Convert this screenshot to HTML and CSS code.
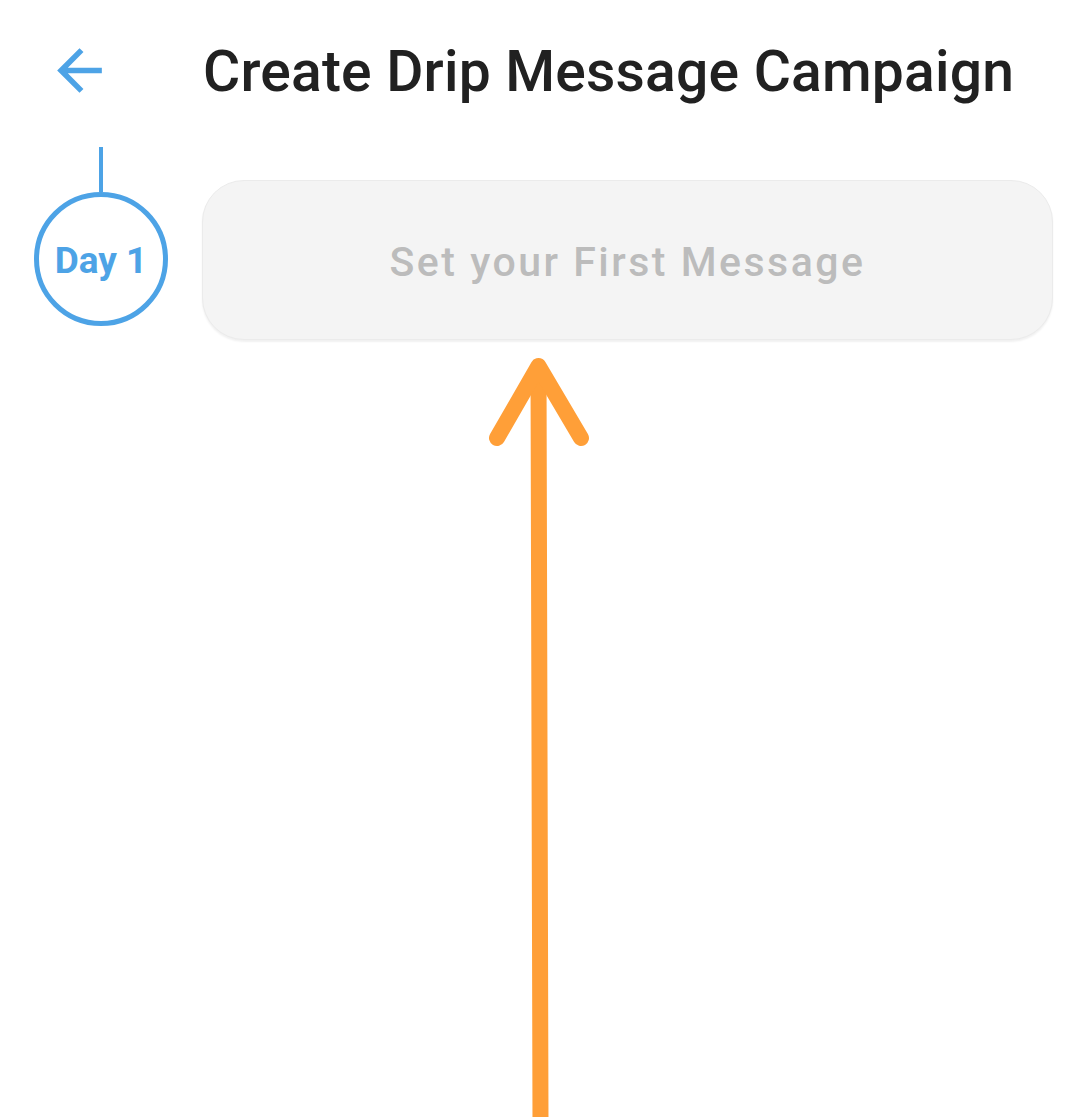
FILE: index.html
```html
<!DOCTYPE html>
<html>
<head>
<meta charset="utf-8">
<link rel="stylesheet" href="styles.css">
</head>
<body>
<div class="page">
  <header class="header">
    <svg class="back" viewBox="0 0 24 24"><path d="M20 11H7.83l5.59-5.59L12 4l-8 8 8 8 1.41-1.41L7.83 13H20v-2z"/></svg>
    <h1 class="title">Create Drip Message Campaign</h1>
  </header>
  <section class="timeline">
    <div class="marker">
      <div class="stem"></div>
      <div class="day">Day 1</div>
    </div>
    <div class="card">Set your First Message</div>
  </section>
  <svg class="annot" viewBox="0 0 1080 1117" width="1080" height="1117">
    <path d="M538.5 368 L540.5 1125" />
    <path d="M497 438 L538.5 366 L581 438" />
  </svg>
</div>
</body>
</html>
```
FILE: styles.css
```css
html, body {
  margin: 0;
  padding: 0;
  background: #ffffff;
}
.page {
  position: relative;
  width: 1080px;
  height: 1117px;
  overflow: hidden;
  font-family: Roboto, "Noto Sans", sans-serif;
}
.header {
  display: flex;
  align-items: center;
  padding: 37px 0 0 46px;
  height: 67px;
}
.back {
  width: 67px;
  height: 67px;
  fill: #4da3e6;
  flex: none;
}
.title {
  margin: 0 0 0 90px;
  padding-top: 2px;
  font-size: 57px;
  font-weight: 500;
  color: #212121;
  letter-spacing: 0.2px;
  white-space: nowrap;
}
.timeline {
  display: flex;
  align-items: flex-start;
  padding: 43px 0 0 34px;
}
.marker {
  display: flex;
  flex-direction: column;
  align-items: center;
  width: 134px;
  flex: none;
}
.stem {
  width: 4px;
  height: 45px;
  background: #4da3e6;
}
.day {
  box-sizing: border-box;
  width: 134px;
  height: 134px;
  padding-top: 3px;
  border: 5px solid #4da3e6;
  border-radius: 50%;
  display: flex;
  align-items: center;
  justify-content: center;
  color: #4da3e6;
  font-weight: 700;
  font-size: 37px;
}
.card {
  box-sizing: border-box;
  margin: 33px 0 0 34px;
  width: 851px;
  height: 160px;
  padding-top: 4px;
  border-radius: 42px;
  background: #f4f4f4;
  border: 1px solid #ebebeb;
  box-shadow: 0 2px 2px rgba(0,0,0,0.06);
  display: flex;
  align-items: center;
  justify-content: center;
  color: #bcbcbc;
  font-size: 41px;
  font-weight: 500;
  letter-spacing: 2.5px;
}
.annot {
  position: absolute;
  left: 0;
  top: 0;
  pointer-events: none;
  fill: none;
  stroke: #ff9f38;
  stroke-width: 16;
  stroke-linecap: round;
  stroke-linejoin: round;
}
```
